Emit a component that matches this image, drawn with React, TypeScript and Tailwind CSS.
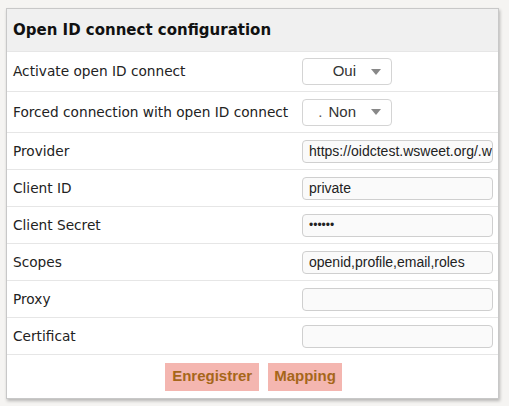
import React from "react";

const rows = [
  { label: "Provider", value: "https://oidctest.wsweet.org/.w" },
  { label: "Client ID", value: "private" },
  { label: "Client Secret", value: "••••••", secret: true },
  { label: "Scopes", value: "openid,profile,email,roles" },
  { label: "Proxy", value: "" },
  { label: "Certificat", value: "" },
];

function Select({ value, dot }: { value: string; dot?: boolean }) {
  return (
    <div className="w-[90px] h-[27px] rounded-[4px] border border-[#d4d4d4] bg-white flex items-center justify-end pr-[10px] font-['Liberation_Sans',Arial,sans-serif] text-[15px] text-[#333]">
      {dot && <span className="mr-[6px] text-[#555]">.</span>}
      <span>{value}</span>
      <svg width="10" height="6" viewBox="0 0 10 6" className="ml-[15px]">
        <path d="M0 0 L10 0 L5 6 Z" fill="#888" />
      </svg>
    </div>
  );
}

export default function App() {
  return (
    <div className="min-h-[406px] w-[509px] bg-[#f5f4f2] pl-[6px] pt-[8px] font-['DejaVu_Sans',sans-serif]">
      <div className="w-[493px] bg-white border border-[#c8c8c8] shadow-[1px_2px_3px_rgba(0,0,0,0.25)]">
        <div className="h-[43px] bg-[#f0f0f0] flex items-center pl-[6px] text-[15px] font-bold text-[#111] border-b border-[#e6e6e6]">
          Open ID connect configuration
        </div>
        <div className="h-[40px] flex items-center justify-between pl-[6px] pr-[106px] border-b border-[#e6e6e6] text-[13.7px] text-[#222]">
          <span>Activate open ID connect</span>
          <Select value="Oui" />
        </div>
        <div className="h-[41px] flex items-center justify-between pl-[6px] pr-[106px] border-b border-[#e6e6e6] text-[13.7px] text-[#222]">
          <span>Forced connection with open ID connect</span>
          <Select value="Non" dot />
        </div>
        {rows.map((r) => (
          <div
            key={r.label}
            className="h-[37px] flex items-center justify-between pl-[6px] pr-[5px] border-b border-[#e6e6e6] text-[13.7px] text-[#222]"
          >
            <span>{r.label}</span>
            <div className="w-[191px] h-[23px] rounded-[4px] border border-[#cfcfcf] bg-[#fafafa] flex items-center pl-[6px] overflow-hidden whitespace-nowrap font-['Liberation_Sans',Arial,sans-serif] text-[14px] text-[#222]">
              {r.secret ? <span className="text-[12px]">{r.value}</span> : r.value}
            </div>
          </div>
        ))}
        <div className="h-[43px] flex items-center justify-center gap-[9px] pl-[2px] font-['Liberation_Sans',Arial,sans-serif]">
          <button className="h-[28px] px-[7px] bg-[#f4b6b0] text-[#a6661a] font-bold text-[15px]">Enregistrer</button>
          <button className="h-[28px] px-[6px] bg-[#f4b6b0] text-[#a6661a] font-bold text-[15px]">Mapping</button>
        </div>
      </div>
    </div>
  );
}
